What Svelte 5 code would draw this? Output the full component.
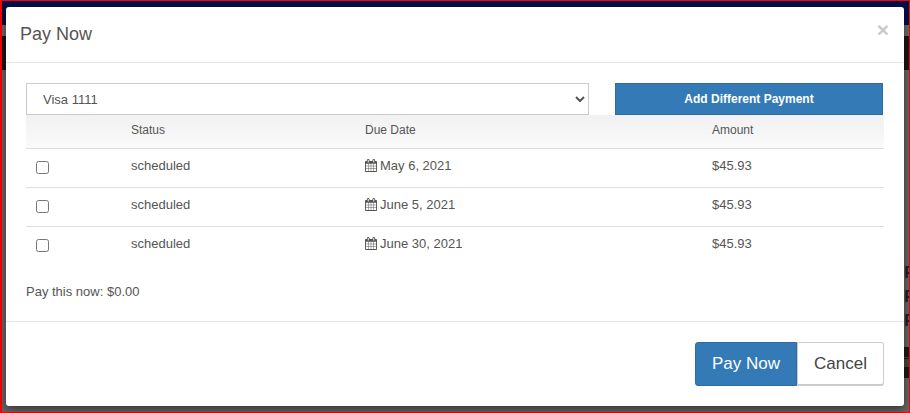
<script lang="ts">
  const rows = [
    { status: "scheduled", due: "May 6, 2021", amount: "$45.93" },
    { status: "scheduled", due: "June 5, 2021", amount: "$45.93" },
    { status: "scheduled", due: "June 30, 2021", amount: "$45.93" },
  ];
</script>

<div class="page">
  <div class="backdrop" aria-hidden="true">
    <div class="band band--navy"></div>
    <div class="band band--grey"></div>
    <div class="band band--black"></div>
    <div class="band band--rest">
      <span class="peek">F</span>
      <span class="peek">F</span>
      <span class="peek">F</span>
      <span class="blocks"></span>
    </div>
  </div>

  <div class="modal">
    <header class="modal__header">
      <h4>Pay Now</h4>
      <span class="close">×</span>
    </header>

    <div class="modal__body">
      <div class="controls">
        <select class="select">
          <option>Visa 1111</option>
        </select>
        <button class="add">Add Different Payment</button>
      </div>

      <table>
        <thead>
          <tr>
            <th class="col-check"></th>
            <th class="col-status">Status</th>
            <th class="col-due">Due Date</th>
            <th>Amount</th>
          </tr>
        </thead>
        <tbody>
          {#each rows as row}
            <tr>
              <td><span class="check"></span></td>
              <td>{row.status}</td>
              <td class="cell-due">
                <span class="due">
                  <svg viewBox="0 0 1664 1792" width="12" height="13" aria-hidden="true">
                    <path fill="#555" d="M128 1664h288v-288h-288v288zm352 0h320v-288h-320v288zm-352-352h288v-320h-288v320zm352 0h320v-320h-320v320zm-352-384h288v-288h-288v288zm736 736h320v-288h-320v288zm-384-736h320v-288h-320v288zm768 736h288v-288h-288v288zm-384-352h320v-320h-320v320zm-352-864v-288q0-13-9.5-22.5t-22.5-9.5h-64q-13 0-22.5 9.5t-9.5 22.5v288q0 13 9.5 22.5t22.5 9.5h64q13 0 22.5-9.5t9.5-22.5zm736 864h288v-320h-288v320zm-384-384h320v-288h-320v288zm384 0h288v-288h-288v288zm32-480v-288q0-13-9.5-22.5t-22.5-9.5h-64q-13 0-22.5 9.5t-9.5 22.5v288q0 13 9.5 22.5t22.5 9.5h64q13 0 22.5-9.5t9.5-22.5zm384-64v1280q0 52-38 90t-90 38h-1408q-52 0-90-38t-38-90v-1280q0-52 38-90t90-38h128v-96q0-66 47-113t113-47h64q66 0 113 47t47 113v96h384v-96q0-66 47-113t113-47h64q66 0 113 47t47 113v96h128q52 0 90 38t38 90z" />
                  </svg>
                  {row.due}
                </span>
              </td>
              <td>{row.amount}</td>
            </tr>
          {/each}
        </tbody>
      </table>

      <p class="total">Pay this now: $0.00</p>
    </div>

    <footer class="modal__footer">
      <button class="btn btn--primary">Pay Now</button>
      <button class="btn btn--default">Cancel</button>
    </footer>
  </div>
</div>

<style>
  :global(body) {
    margin: 0;
  }

  .page {
    position: relative;
    box-sizing: border-box;
    width: 910px;
    height: 413px;
    overflow: hidden;
    padding: 7px 6px;
    font-family: "Liberation Sans", Arial, sans-serif;
    color: #555;
  }

  .backdrop {
    position: absolute;
    inset: 0;
    box-sizing: border-box;
    display: flex;
    flex-direction: column;
    overflow: hidden;
    border: solid #f00;
    border-width: 1px 1px 1px 2px;
    background: #666;
  }

  .band--navy { height: 24px; background: #020f4a; }
  .band--grey { height: 11px; background: #6a6a6a; }
  .band--black { height: 34px; background: #1a1512; }

  .band--rest {
    flex: 1;
    display: flex;
    flex-direction: column;
    align-items: flex-end;
    padding-top: 191px;
    font-size: 16px;
    font-weight: bold;
    line-height: 24px;
    color: #16202e;
  }

  .peek {
    margin-right: -5px;
  }

  .blocks {
    width: 5px;
    height: 31px;
    margin-top: 14px;
    background: linear-gradient(#1a1a1a 0 10px, #4a4436 10px 11px, #1a1a1a 11px 12px, #4a4436 12px 20px, #1a1a1a 20px);
  }

  .modal {
    position: relative;
    box-sizing: border-box;
    width: 898px;
    height: 399px;
    display: flex;
    flex-direction: column;
    background: #fff;
    border-radius: 3px;
    box-shadow: 0 3px 9px rgba(0, 0, 0, 0.5);
  }

  .modal__header {
    box-sizing: border-box;
    height: 56px;
    flex-shrink: 0;
    display: flex;
    align-items: center;
    justify-content: space-between;
    padding: 0 15px 0 14px;
    border-bottom: 1px solid #e5e5e5;
  }

  h4 {
    margin: 0;
    font-size: 18px;
    font-weight: 400;
    color: #555;
  }

  .close {
    font-size: 21px;
    font-weight: bold;
    line-height: 1;
    color: #c9c9c9;
    margin-bottom: 10px;
  }

  .modal__body {
    flex: 1;
    padding: 20px 20px 0;
  }

  .controls {
    display: flex;
    justify-content: space-between;
    padding-right: 1px;
  }

  .select {
    box-sizing: border-box;
    width: 563px;
    height: 32px;
    padding: 1px 0 0 12px;
    font: 13px "Liberation Sans", Arial, sans-serif;
    color: #555;
    background: #fff;
    border: 1px solid #ccc;
    border-radius: 0;
  }

  .add {
    box-sizing: border-box;
    width: 268px;
    height: 32px;
    padding: 0;
    font: bold 12px "Liberation Sans", Arial, sans-serif;
    color: #fff;
    background: #337ab7;
    border: 1px solid #2e6da4;
    border-radius: 0;
  }

  table {
    width: 858px;
    border-collapse: collapse;
    table-layout: fixed;
    font-size: 13px;
  }

  th {
    height: 33px;
    padding: 0 0 3px 8px;
    box-sizing: border-box;
    font-size: 12px;
    font-weight: normal;
    text-align: left;
    background: linear-gradient(#f1f1f1, #fafafa);
    border-bottom: 1px solid #ddd;
  }

  .col-check { width: 97px; }
  .col-status { width: 234px; }
  .col-due { width: 347px; }

  td {
    height: 39px;
    box-sizing: border-box;
    padding: 0 0 5px 8px;
    border-bottom: 1px solid #ddd;
  }

  td.cell-due {
    padding-bottom: 3px;
  }

  tr:last-child td {
    border-bottom: 0;
  }

  td:first-child {
    padding: 0 0 0 10px;
  }

  .check {
    display: block;
    box-sizing: border-box;
    width: 13px;
    height: 13px;
    background: #fff;
    border: 1px solid #767676;
    border-radius: 2.5px;
  }

  .due {
    display: inline-flex;
    align-items: center;
    gap: 3px;
  }

  .total {
    margin: 19px 0 0;
    font-size: 13px;
  }

  .modal__footer {
    box-sizing: border-box;
    height: 85px;
    flex-shrink: 0;
    display: flex;
    justify-content: flex-end;
    align-items: flex-start;
    padding: 20px 20px 0 0;
    border-top: 1px solid #e5e5e5;
  }

  .btn {
    box-sizing: border-box;
    height: 44px;
    font: 17px "Liberation Sans", Arial, sans-serif;
    border: 1px solid;
  }

  .btn--primary {
    width: 102px;
    color: #fff;
    background: #337ab7;
    border-color: #2e6da4;
    border-radius: 3px 0 0 3px;
  }

  .btn--default {
    width: 87px;
    color: #444;
    background: #fff;
    border-color: #ccc;
    border-radius: 0 3px 3px 0;
    border-bottom-width: 2px;
  }
</style>
